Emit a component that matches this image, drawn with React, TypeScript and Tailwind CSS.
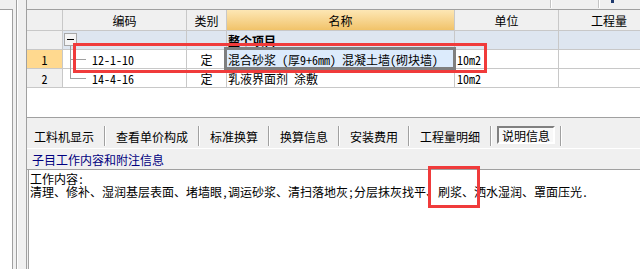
import React from "react";

const FONT = "font-['Noto_Sans_Mono_CJK_SC','Noto_Sans_CJK_SC',sans-serif]";

function Sep() {
  return <div className="w-[2px] h-[20px] border-l border-l-[#a0a0a0] border-r border-r-white shrink-0" />;
}

function Tab({ label, first }: { label: string; first?: boolean }) {
  return (
    <div className={`h-[20px] flex items-center whitespace-nowrap ${first ? "pl-[7px]" : "pl-[10px]"} pr-[10px]`}>
      {label}
    </div>
  );
}

export default function App() {
  const lineColor = "border-[#c8c8c8]";
  return (
    <div className={`relative w-[640px] h-[269px] overflow-hidden flex bg-[#f0f0f0] text-[12px] leading-[13px] text-black ${FONT}`}>
      {/* left docked panel */}
      <div className="w-[13px] shrink-0 flex flex-col">
        <div className="h-[9px]" />
        <div className="flex-1 bg-white border-t border-r border-[#a0a0a0]" />
      </div>
      {/* splitter */}
      <div className="w-[3px] shrink-0" />
      <div className="w-px shrink-0 bg-[#a0a0a0]" />
      <div className="w-px shrink-0 bg-white" />
      <div className="w-[8px] shrink-0" />
      {/* main */}
      <div className="flex-1 min-w-0 flex flex-col border-l border-[#a0a0a0]">
        {/* toolbar strip */}
        <div className="relative h-[10px] shrink-0 border-b border-[#a0a0a0]">
          <span className="absolute left-[523px] top-0 h-[8px] w-px bg-[#c4c4c4]" />
          <span className="absolute left-[524px] top-0 h-[8px] w-px bg-white" />
          <span className="absolute left-[571px] top-0 h-[8px] w-px bg-[#c4c4c4]" />
          <span className="absolute left-[572px] top-0 h-[8px] w-px bg-white" />
          <span className="absolute left-[584px] top-0 h-[3px] w-[3px] bg-[#1f3a6e]" />
        </div>
        {/* grid */}
        <div className="h-[108px] shrink-0 bg-white border-b border-[#a0a0a0] overflow-hidden">
          {/* header */}
          <div className={`flex h-[21px] border-b ${lineColor} bg-[#f0f0f0]`}>
            <div className={`w-[36px] shrink-0 border-r ${lineColor}`} />
            <div className={`w-[124px] shrink-0 border-r ${lineColor} flex items-center justify-center`}>编码</div>
            <div className={`w-[40px] shrink-0 border-r ${lineColor} flex items-center justify-center`}>类别</div>
            <div className={`w-[228px] shrink-0 border-r ${lineColor} flex items-center justify-center bg-gradient-to-b from-[#fde7b4] to-[#f1c369]`}>名称</div>
            <div className={`w-[104px] shrink-0 border-r ${lineColor} flex items-center justify-center`}>单位</div>
            <div className="w-[100px] shrink-0 flex items-center justify-center">工程量</div>
          </div>
          {/* 整个项目 */}
          <div className={`flex h-[19px] border-b ${lineColor}`}>
            <div className={`w-[36px] shrink-0 border-r ${lineColor} bg-[#f0f0f0]`} />
            <div className={`relative w-[124px] shrink-0 border-r ${lineColor} bg-[#dee6f0]`}>
              <span className="absolute left-[1px] top-[2px] w-[13px] h-[13px] border border-[#a8a8a8] bg-[#f4f4f4] flex items-center justify-center">
                <span className="w-[7px] h-px bg-black" />
              </span>
              <span className="absolute left-[7px] top-[15px] bottom-[-1px] w-px bg-[#a0a0a0]" />
            </div>
            <div className={`w-[40px] shrink-0 border-r ${lineColor} bg-[#dee6f0]`} />
            <div className={`w-[228px] shrink-0 border-r ${lineColor} bg-[#dee6f0] flex items-center pl-[1px] font-bold`}>整个项目</div>
            <div className={`w-[104px] shrink-0 border-r ${lineColor} bg-[#dee6f0]`} />
            <div className="w-[100px] shrink-0 bg-[#dee6f0]" />
          </div>
          {/* row 1 */}
          <div className={`flex h-[19px] border-b ${lineColor}`}>
            <div className={`w-[36px] shrink-0 border-r ${lineColor} bg-[#ffd98f] flex items-center justify-center`}>1</div>
            <div className={`relative w-[124px] shrink-0 border-r ${lineColor} flex items-center pl-[29px]`}>
              <span className="absolute left-[7px] top-0 bottom-[-1px] w-px bg-[#a0a0a0]" />
              <span className="absolute left-[8px] top-[9px] w-[15px] h-px bg-[#a0a0a0]" />
              12-1-10
            </div>
            <div className={`w-[40px] shrink-0 border-r ${lineColor} flex items-center justify-center`}>定</div>
            <div className={`relative w-[228px] shrink-0 border-r ${lineColor} bg-[#dcebfc] flex items-center pl-[1px] whitespace-nowrap`}>
              <span className="absolute left-[-3px] top-[-3px] right-[-2px] bottom-[-2px] border-[3px] border-[#7f7f7f]" />
              <span className="relative">混合砂浆 (厚9+6mm) 混凝土墙(砌块墙)</span>
            </div>
            <div className={`w-[104px] shrink-0 border-r ${lineColor} flex items-center pl-[2px]`}>10m2</div>
            <div className="w-[100px] shrink-0" />
          </div>
          {/* row 2 */}
          <div className={`flex h-[19px] border-b ${lineColor}`}>
            <div className={`w-[36px] shrink-0 border-r ${lineColor} bg-[#f0f0f0] flex items-center justify-center`}>2</div>
            <div className={`relative w-[124px] shrink-0 border-r ${lineColor} flex items-center pl-[29px]`}>
              <span className="absolute left-[7px] top-0 h-[9px] w-px bg-[#a0a0a0]" />
              <span className="absolute left-[7px] top-[9px] w-[16px] h-px bg-[#a0a0a0]" />
              14-4-16
            </div>
            <div className={`w-[40px] shrink-0 border-r ${lineColor} flex items-center justify-center`}>定</div>
            <div className={`w-[228px] shrink-0 border-r ${lineColor} flex items-center pl-[1px] whitespace-nowrap`}>乳液界面剂 涂敷</div>
            <div className={`w-[104px] shrink-0 border-r ${lineColor} flex items-center pl-[2px]`}>10m2</div>
            <div className="w-[100px] shrink-0" />
          </div>
        </div>
        {/* tabs */}
        <div className="h-[30px] shrink-0 pt-[8px] flex items-start">
          <Tab label="工料机显示" first />
          <Sep />
          <Tab label="查看单价构成" />
          <Sep />
          <Tab label="标准换算" />
          <Sep />
          <Tab label="换算信息" />
          <Sep />
          <Tab label="安装费用" />
          <Sep />
          <Tab label="工程量明细" />
          <Sep />
          <div className="ml-[5px] h-[18px] w-[58px] border-2 border-t-[#808080] border-l-[#808080] border-b-white border-r-white bg-[#f8f8f8] flex items-center justify-center whitespace-nowrap">
            说明信息
          </div>
          <div className="ml-[5px]">
            <Sep />
          </div>
        </div>
        {/* title band */}
        <div className="h-[22px] shrink-0 border-t border-t-white border-b border-b-[#a0a0a0] flex items-center pl-[5px] text-[#000080]">
          子目工作内容和附注信息
        </div>
        {/* content */}
        <div className="flex-1 ml-px bg-white border-l border-[#a0a0a0] pl-px pt-[2px] whitespace-nowrap">
          <div>工作内容:</div>
          <div>清理、修补、湿润基层表面、堵墙眼,调运砂浆、清扫落地灰;分层抹灰找平、刷浆、洒水湿润、罩面压光.</div>
        </div>
      </div>

      {/* annotation boxes */}
      <div className="absolute left-[73px] top-[43px] w-[414px] h-[30px] border-[3px] border-[#f03b3b] pointer-events-none" />
      <div className="absolute left-[428px] top-[166px] w-[52px] h-[42px] border-[3px] border-[#f03b3b] pointer-events-none" />
    </div>
  );
}
